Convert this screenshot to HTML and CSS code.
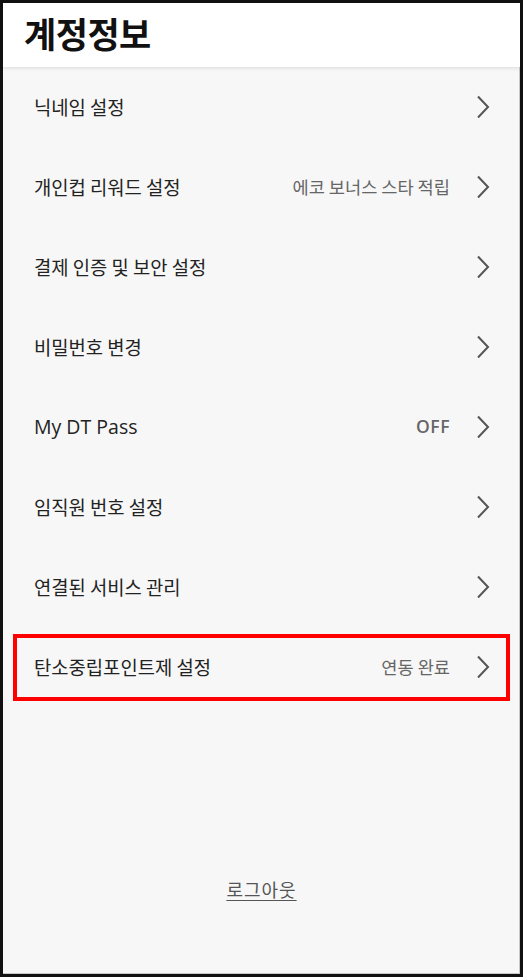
FILE: index.html
```html
<html>
<head>
  <meta charset="utf-8">
  <link rel="stylesheet" href="styles.css">
</head>
<body>
  <div class="frame">
    <div class="header">
      <h1>계정정보</h1>
    </div>

    <ul class="menu">
      <li class="row"><span class="label">닉네임 설정</span><span class="chev"><svg width="14" height="24" viewBox="0 0 14 24"><path d="M2 1.5 L12 12 L2 22.5" /></svg></span></li>
      <li class="row"><span class="label">개인컵 리워드 설정</span><span class="value">에코 보너스 스타 적립</span><span class="chev"><svg width="14" height="24" viewBox="0 0 14 24"><path d="M2 1.5 L12 12 L2 22.5" /></svg></span></li>
      <li class="row"><span class="label">결제 인증 및 보안 설정</span><span class="chev"><svg width="14" height="24" viewBox="0 0 14 24"><path d="M2 1.5 L12 12 L2 22.5" /></svg></span></li>
      <li class="row"><span class="label">비밀번호 변경</span><span class="chev"><svg width="14" height="24" viewBox="0 0 14 24"><path d="M2 1.5 L12 12 L2 22.5" /></svg></span></li>
      <li class="row"><span class="label latin">My DT Pass</span><span class="value latin">OFF</span><span class="chev"><svg width="14" height="24" viewBox="0 0 14 24"><path d="M2 1.5 L12 12 L2 22.5" /></svg></span></li>
      <li class="row"><span class="label">임직원 번호 설정</span><span class="chev"><svg width="14" height="24" viewBox="0 0 14 24"><path d="M2 1.5 L12 12 L2 22.5" /></svg></span></li>
      <li class="row"><span class="label">연결된 서비스 관리</span><span class="chev"><svg width="14" height="24" viewBox="0 0 14 24"><path d="M2 1.5 L12 12 L2 22.5" /></svg></span></li>
      <li class="row highlight"><span class="label">탄소중립포인트제 설정</span><span class="value">연동 완료</span><span class="chev"><svg width="14" height="24" viewBox="0 0 14 24"><path d="M2 1.5 L12 12 L2 22.5" /></svg></span></li>
    </ul>

    <div class="footer">
      <a class="logout" href="#">로그아웃</a>
    </div>
  </div>
</body>
</html>
```

FILE: styles.css
```css
html, body {
  margin: 0;
  padding: 0;
}
body {
  font-family: "Noto Sans CJK KR", "Noto Sans", sans-serif;
  color: #222;
}
.frame {
  width: 523px;
  height: 977px;
  box-sizing: border-box;
  border: 3px solid #111;
  background: #f7f7f7;
  display: flex;
  flex-direction: column;
  box-shadow: inset -1px -1px 0 #c8c8c8;
}
.header {
  background: #fff;
  height: 64px;
  padding-left: 21px;
  box-shadow: 0 1px 4px rgba(0, 0, 0, 0.12);
  position: relative;
  z-index: 1;
}
.header h1 {
  margin: 0;
  font-size: 35px;
  font-weight: bold;
  line-height: 60px;
  letter-spacing: -0.5px;
  color: #111;
}
.menu {
  list-style: none;
  margin: 0;
  padding: 0;
}
.row {
  height: 80px;
  display: flex;
  align-items: center;
  padding: 0 30px 0 31px;
  position: relative;
}
.label {
  flex: 1;
  font-size: 18.8px;
  color: #222;
  padding-bottom: 2px;
}
.value {
  font-size: 17.6px;
  color: #666;
  margin-right: 26px;
  padding-bottom: 2px;
}
.latin {
  font-family: "Open Sans", "Noto Sans", sans-serif;
}
.label.latin {
  font-size: 19.5px;
  font-weight: 500;
}
.value.latin {
  font-weight: 600;
  font-size: 17.5px;
  letter-spacing: 0.5px;
}
.chev {
  display: flex;
  align-items: center;
}
.chev path {
  fill: none;
  stroke: #555;
  stroke-width: 2;
}
.highlight::after {
  content: "";
  position: absolute;
  top: 7px;
  bottom: 6px;
  left: 10px;
  right: 10px;
  border: 4px solid #f00;
}
.footer {
  flex: 1;
  display: flex;
  justify-content: center;
  align-items: flex-end;
  padding-bottom: 72px;
}
.logout {
  font-size: 18px;
  letter-spacing: 1px;
  color: #555;
  text-decoration: underline;
  text-underline-offset: 3px;
}
```
